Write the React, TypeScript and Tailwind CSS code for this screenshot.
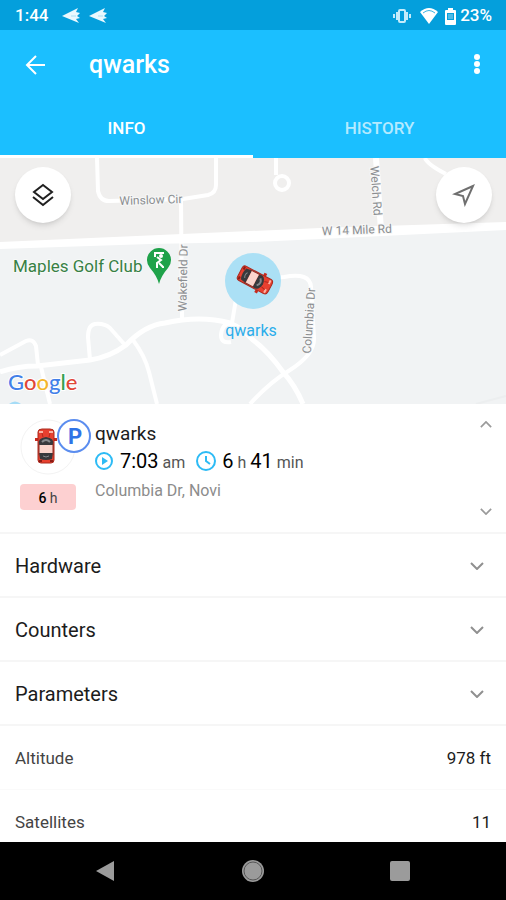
import React from 'react';

const Car: React.FC = () => (
  <g>
    <path d="M-11 -8h3v3h-3zM8 -8h3v3h-3z" fill="#c8291d" />
    <path d="M-8 -14Q-8 -17 -4 -17H4Q8 -17 8 -14V14Q8 17 5 17H-5Q-8 17 -8 14Z" fill="#e8402f" stroke="#a92a1f" />
    <path d="M-7 -15h4v2h-4zM3 -15h4v2h-4z" fill="#f9b3a4" />
    <path d="M-4 -13L-3 -9M4 -13L3 -9" stroke="#b5291d" />
    <path d="M-7 -1Q-9 -8 0 -9Q9 -8 7 -1Z" fill="#38393c" />
    <path d="M-4 -4Q0 -8 4 -4" fill="none" stroke="#85888c" strokeWidth="2" />
    <path d="M-7 7H7L6 13Q0 15 -6 13Z" fill="#38393c" />
    <path d="M-3 10Q0 12 3 10" fill="none" stroke="#85888c" />
    <path d="M-7 -1H7V7H-7Z" fill="#fbd5cd" />
    <path d="M-7 -2V9M7 -2V9" stroke="#8a2f27" />
    <path d="M-7 15h3M4 15h3" stroke="#8d1b14" strokeWidth="2" />
  </g>
);

const PlaneIcon: React.FC = () => (
  <svg className="h-4 w-[18px]" viewBox="0 0 18 16" aria-hidden="true">
    <path d="M0 8L16 0L14 4L18 5L15 8L18 10L14 11L17 15Z" fill="#e9f8fe" />
    <path d="M9 8H14" stroke="#a9def4" />
  </svg>
);

const Chevron: React.FC<{ className: string; up?: boolean }> = ({ className, up }) => (
  <svg className={className} viewBox="0 0 14 8" fill="none" stroke="currentColor" strokeWidth="2" aria-hidden="true">
    <path d={up ? 'M1 7L7 1L13 7' : 'M1 1L7 7L13 1'} />
  </svg>
);

const StatusBar: React.FC = () => (
  <div className="flex h-[30px] shrink-0 items-center bg-[#049fdc] pt-0.5 pr-[14px] pl-[15px] text-[17px] font-medium text-white">
    <span>1:44</span>
    <div className="ml-[14px] flex gap-[9px]">
      <PlaneIcon />
      <PlaneIcon />
    </div>
    <div className="ml-auto flex items-center">
      <svg className="h-[14px] w-[18px]" viewBox="0 0 18 14" fill="none" stroke="#c4ecfb" aria-hidden="true">
        <rect x="6" y="1" width="6" height="12" rx="1" strokeWidth="2" />
        <path d="M4 3V11M14 3V11" strokeWidth="2" />
        <path d="M1 5V9M17 5V9" strokeWidth="2" />
      </svg>
      <svg className="ml-[9px] h-4 w-[18px]" viewBox="0 0 18 16" aria-hidden="true">
        <path d="M0 4Q9 -4 18 4L9 16Z" fill="#fff" />
        <path d="M3 5Q9 0 15 5" fill="none" stroke="#3cb4e3" />
      </svg>
      <svg className="ml-[7px] h-[17px] w-[11px]" viewBox="0 0 11 17" aria-hidden="true">
        <path d="M3 0H8V2H10Q11 2 11 3V16Q11 17 10 17H1Q0 17 0 16V3Q0 2 1 2H3Z" fill="#fff" />
        <path d="M2 5H9V12H2Z" fill="#049fdc" />
        <path d="M3 6H8V11H3Z" fill="#4fbae6" />
      </svg>
      <span className="ml-1">23%</span>
    </div>
  </div>
);

const Header: React.FC = () => (
  <header className="shrink-0 bg-[#1bbfff] text-white">
    <div className="flex h-[70px] items-center px-6">
      <button type="button" aria-label="Back">
        <svg className="h-[22px] w-[22px]" viewBox="0 0 22 22" fill="none" stroke="currentColor" strokeWidth="2" aria-hidden="true">
          <path d="M21 11H3M12 2L3 11L12 20" />
        </svg>
      </button>
      <h1 className="ml-[43px] text-[25px] font-medium">qwarks</h1>
      <button type="button" aria-label="More options" className="ml-auto">
        <svg className="h-[22px] w-[10px]" viewBox="0 0 10 22" fill="currentColor" aria-hidden="true">
          <circle cx="5" cy="3" r="3" />
          <circle cx="5" cy="10" r="3" />
          <circle cx="5" cy="17" r="3" />
        </svg>
      </button>
    </div>
    <div className="flex h-[58px] text-[17px] font-medium" role="tablist">
      <button type="button" role="tab" aria-selected="true" className="flex-1 border-b-3 border-white pt-[3px]">
        INFO
      </button>
      <button type="button" role="tab" aria-selected="false" className="flex-1 border-b-3 border-[#1bbfff] pt-[3px] text-[#b4eaff]">
        HISTORY
      </button>
    </div>
  </header>
);

const MapView: React.FC = () => (
  <section className="relative h-[246px] shrink-0 overflow-hidden" aria-label="Map">
    <svg className="h-full w-full" viewBox="0 0 506 246" preserveAspectRatio="xMidYMid slice">
      <rect width="506" height="246" fill="#f1f3f4" />
      <path d="M0 0H506V68L320 75L0 87Z" fill="#f0efee" />
      <g fill="none" stroke="#fff" strokeWidth="4" strokeLinejoin="round">
        <path d="M97 0L98 33Q100 43 109 43L183 41L208 37Q216 35 216 27V0" />
        <path d="M181 42L182 162" />
        <path d="M276 0V17" />
        <circle cx="282" cy="25" r="7" />
        <path d="M376 0L381 72" strokeWidth="6" />
        <path d="M425 0Q427 6 446 16" />
        <path d="M0 214Q18 208 37 208L90 202Q110 199 126 187Q145 167 165 165Q200 157 230 165Q242 170 253 182Q268 193 283 214Q295 227 303 246" strokeWidth="5" />
        <path d="M0 197L26 183Q33 180 36 188L38 207" />
        <path d="M41 209L50 246" />
        <path d="M90 202L88 179Q88 167 95 166Q104 165 110 170L125 187" />
        <path d="M133 182Q145 198 149 214L157 246" />
        <path d="M270 120L284 119Q310 114 311 129L314 180Q315 196 290 212Q270 224 250 246" />
        <path d="M237 135L232 165Q222 165 221 177Q221 186 231 184" />
      </g>
      <path d="M0 84L320 70L506 64V72L320 81L253 84L150 86L0 91Z" fill="#fff" />
      <path d="M476 246L506 238" stroke="#eceeef" strokeWidth="2" />
      <path d="M9 246Q15 241 21 246Z" fill="#a6dcf6" />

      <g fill="#8b8e91" fontSize="12" textAnchor="middle" stroke="#f7f7f7" strokeWidth="2" paintOrder="stroke">
        <text transform="translate(151 46) rotate(-2)">Winslow Cir</text>
        <text transform="translate(372 33) rotate(86)">Welch Rd</text>
        <text transform="translate(357 76) rotate(-2)">W 14 Mile Rd</text>
        <text transform="translate(187 120) rotate(-89)">Wakefield Dr</text>
        <text transform="translate(313 163) rotate(-86)">Columbia Dr</text>
      </g>
      <text x="13" y="114" fill="#388044" fontSize="17" stroke="#f7f9f8" strokeWidth="2" paintOrder="stroke">Maples Golf Club</text>
      <path d="M159 126Q157 118 150 110A12 12 0 1 1 168 110Q161 118 159 126Z" fill="#1fa24a" />
      <path d="M164 95H155V99M157 99L161 102L157 105V110M159 105L163 109V110" fill="none" stroke="#fff" strokeWidth="2" />
      <circle cx="161" cy="98" r="2" fill="#fff" />

      <circle cx="253" cy="123" r="28" fill="#abe0f5" />
      <g transform="translate(255 122) rotate(118)">
        <Car />
      </g>
      <text x="251" y="178" fill="#2badeb" fontSize="16" textAnchor="middle" stroke="#f1f3f4" strokeWidth="2" paintOrder="stroke">qwarks</text>
      <text x="8" y="232" className="font-[Lato]" fontSize="22" fontWeight="500" stroke="#fff" strokeWidth="2" paintOrder="stroke">
        <tspan fill="#4280e8">G</tspan>
        <tspan fill="#e04637">o</tspan>
        <tspan fill="#f3b62c">o</tspan>
        <tspan fill="#4280e8">g</tspan>
        <tspan fill="#34a04f">l</tspan>
        <tspan fill="#e04637">e</tspan>
      </text>
    </svg>
    <button type="button" aria-label="Map layers" className="absolute top-[9px] left-[15px] flex h-14 w-14 items-center justify-center rounded-full bg-white shadow-md">
      <svg className="h-6 w-6" viewBox="0 0 24 24" fill="none" stroke="#202020" strokeWidth="2" aria-hidden="true">
        <path d="M12 2L21 9L12 16L3 9Z" />
        <path d="M2 14L12 22L22 14" />
      </svg>
    </button>
    <button type="button" aria-label="My location" className="absolute top-[9px] right-[14px] flex h-14 w-14 items-center justify-center rounded-full bg-white shadow-md">
      <svg className="h-6 w-6" viewBox="0 0 24 24" fill="none" stroke="#6f6f6f" strokeWidth="2" aria-hidden="true">
        <path d="M21 3L3 11L11 13L13 21Z" />
      </svg>
    </button>
  </section>
);

const DeviceCard: React.FC = () => (
  <section className="flex h-[130px] shrink-0 border-b-2 border-[#f6f6f6] pr-[14px] pl-5">
    <div className="w-[75px] pt-[15px]">
      <svg className="h-[56px] w-[72px]" viewBox="0 0 72 56" aria-hidden="true">
        <circle cx="28" cy="28" r="27" fill="#fff" stroke="#f3f3f3" />
        <g transform="translate(26 27)">
          <Car />
        </g>
        <circle cx="54" cy="17" r="16" fill="#fff" stroke="#5b8def" strokeWidth="2" />
        <text x="55" y="25" fill="#2f74e6" fontSize="22" fontWeight="700" textAnchor="middle">P</text>
      </svg>
      <div className="mt-[9px] flex h-[26px] w-14 items-center justify-center rounded bg-[#fdd0d1] pt-0.5 text-sm text-[#444]">
        <span className="font-medium text-black">6</span>&nbsp;h
      </div>
    </div>
    <div className="flex-1 pt-[17px]">
      <h2 className="text-[19px] leading-[26px] text-[#1c1c1c]">qwarks</h2>
      <div className="flex h-7 items-center text-base text-[#555]">
        <svg className="mr-[7px] h-[18px] w-[18px]" viewBox="0 0 18 18" fill="none" stroke="#2dbbf5" strokeWidth="2" aria-hidden="true">
          <circle cx="9" cy="9" r="8" />
          <path d="M7 5L13 9L7 13Z" fill="#2dbbf5" stroke="none" />
        </svg>
        <p>
          <span className="text-xl text-black">7:03</span> am
        </p>
        <svg className="mr-[6px] ml-[11px] h-5 w-5" viewBox="0 0 20 20" fill="none" stroke="#2dbbf5" strokeWidth="2" aria-hidden="true">
          <circle cx="10" cy="10" r="9" />
          <path d="M10 5V10L14 13" />
        </svg>
        <p>
          <span className="text-xl text-black">6</span> h <span className="text-xl text-black">41</span> min
        </p>
      </div>
      <p className="mt-1 text-base leading-6 text-[#8c8c8c]">Columbia Dr, Novi</p>
    </div>
    <div className="flex flex-col justify-between pt-[17px] pb-4 text-[#9a9a9a]">
      <button type="button" aria-label="Previous" className="flex h-2">
        <Chevron className="h-[7px] w-3" up />
      </button>
      <button type="button" aria-label="Next" className="flex h-2">
        <Chevron className="h-[7px] w-3" />
      </button>
    </div>
  </section>
);

const sections = ['Hardware', 'Counters', 'Parameters'];

const readings = [
  { label: 'Altitude', value: '978 ft' },
  { label: 'Satellites', value: '11' },
];

const NavigationBar: React.FC = () => (
  <nav className="flex h-[58px] shrink-0 items-center justify-center gap-[123px] bg-black text-[#9b9b9b]">
    <button type="button" aria-label="Back">
      <svg className="h-6 w-6" viewBox="0 0 24 24" fill="currentColor" aria-hidden="true">
        <path d="M2 12L20 2V22Z" />
      </svg>
    </button>
    <button type="button" aria-label="Home">
      <svg className="h-6 w-6" viewBox="0 0 24 24" fill="currentColor" aria-hidden="true">
        <circle cx="12" cy="12" r="11" />
        <circle cx="12" cy="12" r="9" fill="none" stroke="#555" />
      </svg>
    </button>
    <button type="button" aria-label="Recent apps">
      <svg className="h-6 w-6" viewBox="0 0 24 24" fill="currentColor" aria-hidden="true">
        <rect x="2" y="2" width="20" height="20" rx="2" />
      </svg>
    </button>
  </nav>
);

const App: React.FC = () => {
  return (
    <div className="flex h-screen flex-col bg-white font-[Roboto,sans-serif]">
      <StatusBar />
      <Header />
      <main className="flex min-h-0 flex-1 flex-col overflow-hidden">
        <MapView />
        <DeviceCard />
        {sections.map((name) => (
          <button
            key={name}
            type="button"
            className="flex h-16 shrink-0 items-center justify-between border-b-2 border-[#f6f6f6] pt-0.5 pr-[22px] pl-[15px] text-xl text-[#1c1c1c]"
          >
            {name}
            <Chevron className="h-2 w-[14px] text-[#909090]" />
          </button>
        ))}
        <dl className="shrink-0 text-[17px]">
          {readings.map(({ label, value }) => (
            <div key={label} className="flex h-16 items-center justify-between border-b border-[#fafafa] px-[15px] pt-0.5">
              <dt className="text-[#444]">{label}</dt>
              <dd className="text-[#1c1c1c]">{value}</dd>
            </div>
          ))}
        </dl>
      </main>
      <NavigationBar />
    </div>
  );
};

export default App;
